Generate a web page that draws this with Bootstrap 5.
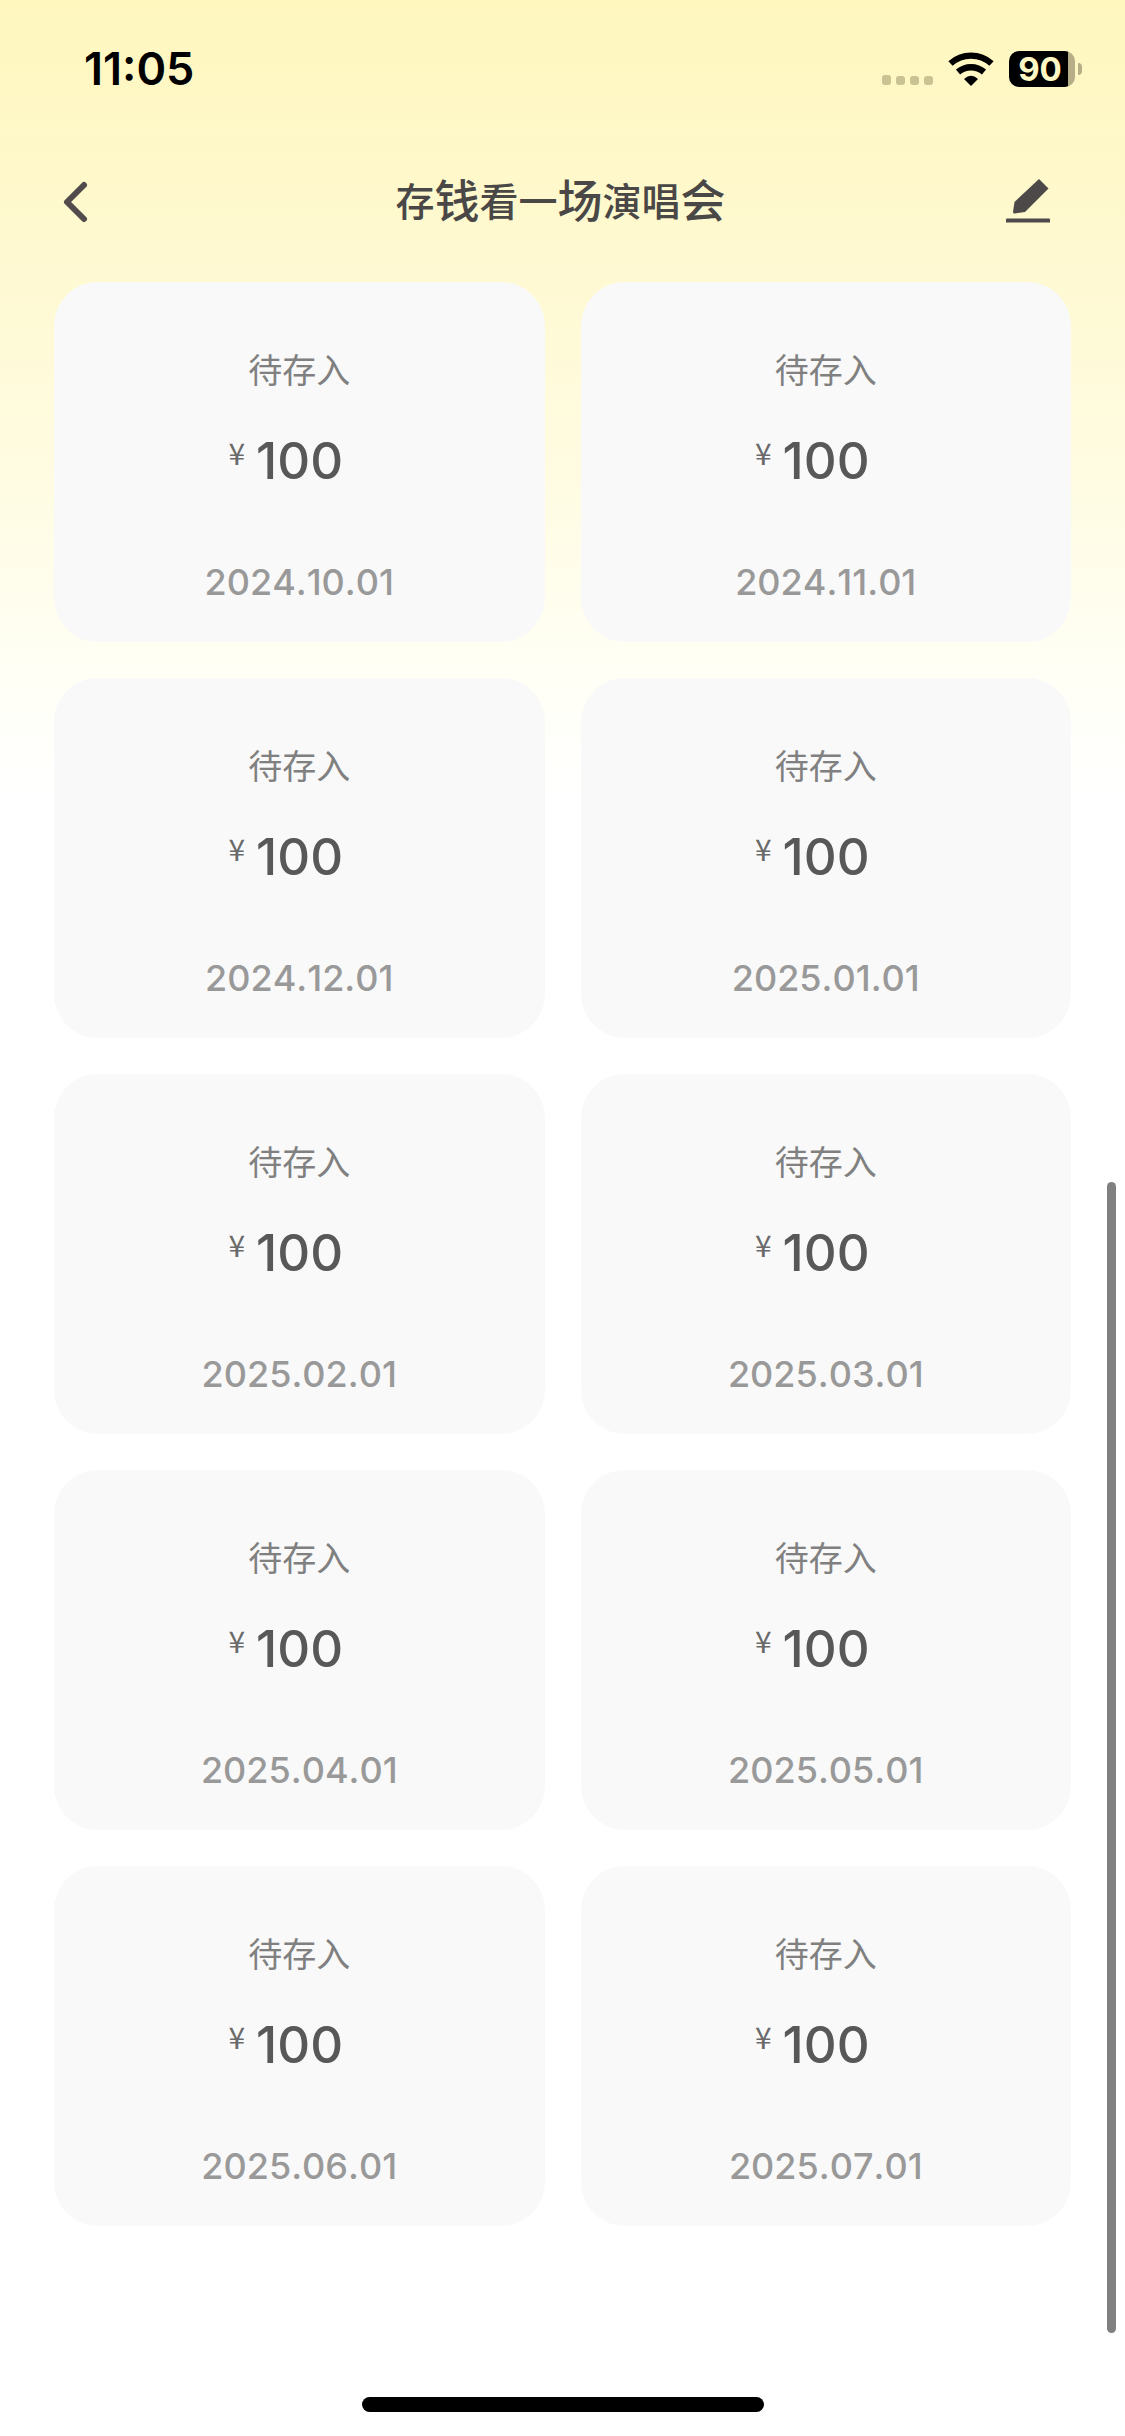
<!DOCTYPE html>
<html lang="zh-CN">
<head>
<meta charset="utf-8">
<meta name="viewport" content="width=device-width, initial-scale=1">
<title>存钱看一场演唱会</title>
<link href="https://cdn.jsdelivr.net/npm/bootstrap@5.3.0/dist/css/bootstrap.min.css" rel="stylesheet">
<style>
  body {
    font-family: Inter, "Noto Sans CJK SC", sans-serif;
    background: #fff linear-gradient(#fff7be 0, #fef9d1 260px, #fffce4 500px, #fffff6 680px, #fff 800px) no-repeat;
    color: #4a4747;
  }
  .status-bar { height: 138px; padding: 0 43px 0 84px; color: #000; }
  .clock { font-size: 45px; font-weight: 600; line-height: 54px; font-kerning: none; }
  .wifi { margin: 0 15px 0 14px; }
  .battery-body { width: 66px; height: 36px; border-radius: 10px; padding-right: 4px; background: linear-gradient(90deg, #000 59px, #b5ae86 59px); color: #fff8c4; font-size: 33px; font-weight: 700; line-height: 36px; }
  .battery-cap { width: 4px; height: 12px; margin-left: 3px; border-radius: 0 6px 6px 0; background: #b5ae86; }
  .top-bar { height: 128px; padding: 0 56px 0 52px; }
  .icon-btn { width: 72px; height: 72px; color: inherit; }
  .page-title { font-size: 39px; line-height: 60px; font-weight: 500; }
  .page-title b { font-size: 45px; font-weight: 500; }
  .plan { padding: 16px 54px 0; }
  .plan-grid { --bs-gutter-x: 36px; --bs-gutter-y: 36px; }
  .plan-card { height: 360px; padding: 65px 0 38px; border-radius: 44px; background: #f9f9f9; }
  .plan-state { font-size: 34px; line-height: 48px; color: #808080; }
  .plan-sum { margin-top: 36px; padding-right: 27px; gap: 11px; line-height: 60px; color: #585858; }
  .plan-yen { font-family: "Noto Sans CJK SC", sans-serif; font-size: 30px; line-height: 42px; color: #6a6a6a; }
  .plan-num { font-size: 51px; font-weight: 500; }
  .plan-date { font-size: 36px; font-weight: 500; line-height: 44px; color: #999; font-kerning: none; }
  .scroll-thumb { top: 1182px; right: 9px; width: 9px; height: 1151px; background: #808080; }
  .home-area { padding-bottom: 24px; }
  .home-bar { width: 402px; height: 15px; background: #000; }
</style>
<script src="https://cdn.jsdelivr.net/npm/bootstrap@5.3.0/dist/js/bootstrap.bundle.min.js"></script>
</head>
<body class="min-vh-100 d-flex flex-column position-relative">

<div class="status-bar d-flex align-items-center justify-content-between">
  <span class="clock">11:05</span>
  <div class="d-flex align-items-center">
    <svg width="52" height="36" viewBox="0 0 52 36" fill="#c9c292" aria-hidden="true">
      <rect x="0" y="24" width="9" height="10" rx="3"/><rect x="14" y="25" width="9" height="9" rx="3"/>
      <rect x="28" y="25" width="9" height="9" rx="3"/><rect x="42" y="25" width="9" height="9" rx="3"/>
    </svg>
    <svg class="wifi" width="46" height="36" viewBox="0 0 46 36" role="img" aria-label="Wi-Fi">
      <g fill="none" stroke="#000" stroke-width="6.400">
        <path d="M2.500 12.500a30.500 30.500 0 0 1 41 0"/>
        <path d="M10 21a20 20 0 0 1 26 0"/>
      </g>
      <path d="M16 28q7-6.500 14 0l-7 7z"/>
    </svg>
    <div class="battery-body text-center">90</div>
    <div class="battery-cap"></div>
  </div>
</div>

<header class="top-bar d-flex align-items-center justify-content-between">
  <button type="button" class="icon-btn btn p-0 border-0 d-flex align-items-center" aria-label="返回">
    <svg width="40" height="44" viewBox="0 0 40 44" fill="none" stroke="#514b4c" stroke-width="6" stroke-linecap="round" stroke-linejoin="round"><path d="M32 5 15 22l17 17"/></svg>
  </button>
  <h1 class="page-title m-0 text-nowrap d-flex align-items-center">存<b>钱</b>看一<b>场</b>演唱<b>会</b></h1>
  <button type="button" class="icon-btn btn p-0 border-0 d-flex align-items-center justify-content-end" aria-label="编辑">
    <svg class="me-3" width="50" height="48" viewBox="0 0 50 48" fill="#4d4948"><path d="M36 1l9.500 9.500-23.500 23.500-10.500 1.500q-1.500 0-1.500-1.500l1.500-10z"/><path d="M4 40.500h42a1 1 0 0 1 1 1v3h-44v-3a1 1 0 0 1 1-1z"/></svg>
  </button>
</header>

<main class="plan">
  <div class="plan-grid row row-cols-2" id="plan"></div>
</main>

<div class="scroll-thumb position-absolute rounded-pill"></div>

<footer class="home-area mt-auto d-flex justify-content-center">
  <div class="home-bar rounded-pill"></div>
</footer>

<script>
  const dates = ['2024.10.01', '2024.11.01', '2024.12.01', '2025.01.01', '2025.02.01',
                 '2025.03.01', '2025.04.01', '2025.05.01', '2025.06.01', '2025.07.01'];
  document.getElementById('plan').innerHTML = dates.map(date => `
    <div class="col">
      <article class="plan-card d-flex flex-column align-items-center">
        <div class="plan-state">待存入</div>
        <div class="plan-sum d-flex"><span class="plan-yen">¥</span><span class="plan-num">100</span></div>
        <time class="plan-date mt-auto">${date}</time>
      </article>
    </div>`).join('');
</script>
</body>
</html>
